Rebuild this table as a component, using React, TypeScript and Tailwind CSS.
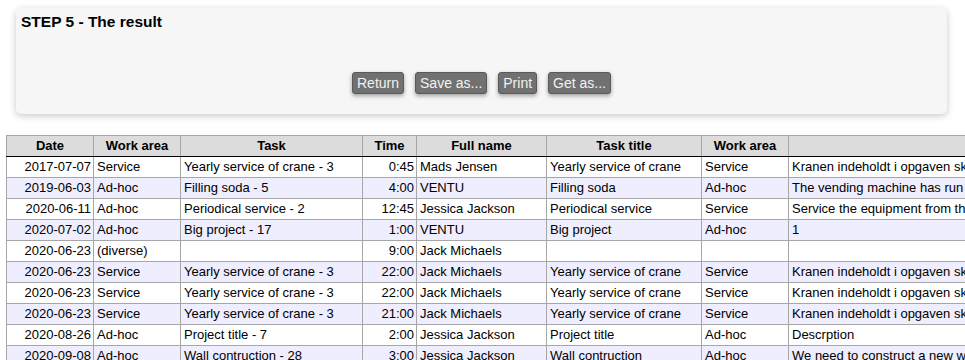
import React from "react";

type Row = {
    date: string;
    area: string;
    task: string;
    time: string;
    name: string;
    title: string;
    area2: string;
    desc: string;
};

const rows: Row[] = [
    {date: "2017-07-07", area: "Service", task: "Yearly service of crane - 3", time: "0:45", name: "Mads Jensen", title: "Yearly service of crane", area2: "Service", desc: "Kranen indeholdt i opgaven skal have det årlige eftersyn"},
    {date: "2019-06-03", area: "Ad-hoc", task: "Filling soda - 5", time: "4:00", name: "VENTU", title: "Filling soda", area2: "Ad-hoc", desc: "The vending machine has run out of soda"},
    {date: "2020-06-11", area: "Ad-hoc", task: "Periodical service - 2", time: "12:45", name: "Jessica Jackson", title: "Periodical service", area2: "Service", desc: "Service the equipment from this list"},
    {date: "2020-07-02", area: "Ad-hoc", task: "Big project - 17", time: "1:00", name: "VENTU", title: "Big project", area2: "Ad-hoc", desc: "1"},
    {date: "2020-06-23", area: "(diverse)", task: "", time: "9:00", name: "Jack Michaels", title: "", area2: "", desc: ""},
    {date: "2020-06-23", area: "Service", task: "Yearly service of crane - 3", time: "22:00", name: "Jack Michaels", title: "Yearly service of crane", area2: "Service", desc: "Kranen indeholdt i opgaven skal have det årlige eftersyn"},
    {date: "2020-06-23", area: "Service", task: "Yearly service of crane - 3", time: "22:00", name: "Jack Michaels", title: "Yearly service of crane", area2: "Service", desc: "Kranen indeholdt i opgaven skal have det årlige eftersyn"},
    {date: "2020-06-23", area: "Service", task: "Yearly service of crane - 3", time: "21:00", name: "Jack Michaels", title: "Yearly service of crane", area2: "Service", desc: "Kranen indeholdt i opgaven skal have det årlige eftersyn"},
    {date: "2020-08-26", area: "Ad-hoc", task: "Project title - 7", time: "2:00", name: "Jessica Jackson", title: "Project title", area2: "Ad-hoc", desc: "Descrption"},
    {date: "2020-09-08", area: "Ad-hoc", task: "Wall contruction - 28", time: "3:00", name: "Jessica Jackson", title: "Wall contruction", area2: "Ad-hoc", desc: "We need to construct a new wall in the hall"},
];

const Btn = ({label}: { label: string }) => (
    <button type="button"
            className="h-[22px] px-[4px] rounded-[3px] border border-[#595959] bg-[#717171] text-[#f2f2f2] text-[14px] leading-[20px] shadow-[0_2px_4px_rgba(0,0,0,0.35)]">
        {label}
    </button>
);

const td = "border border-[#a6a6a6] h-[21px] py-0 px-[3px] leading-[20px] whitespace-nowrap overflow-hidden";
const th = "border border-[#a6a6a6] border-b-black h-[21px] py-0 px-[3px] leading-[20px] font-bold text-center whitespace-nowrap";

export default function App() {
    return (
        <div className="w-[965px] h-[360px] overflow-hidden bg-white text-black font-['Liberation_Sans',Arial,sans-serif]">
            <div className="pt-[8px] ml-4 mr-[18px]">
                <div className="flex flex-col h-[106px] rounded-[5px] bg-[#f6f6f6] shadow-[0_2px_7px_rgba(0,0,0,0.22)] pt-[5px] px-[5px]">
                    <h3 className="text-[15.5px] font-bold leading-[18px]">STEP 5 - The result</h3>
                    <div className="flex justify-center gap-[11px] mt-[41px]">
                        <Btn label="Return"/>
                        <Btn label="Save as..."/>
                        <Btn label="Print"/>
                        <Btn label="Get as..."/>
                    </div>
                </div>
            </div>
            <div className="pl-[6px] pt-[21px]">
                <table className="table-fixed border-collapse text-[13px] w-[1300px]">
                    <colgroup>
                        <col className="w-[87px]"/>
                        <col className="w-[87px]"/>
                        <col className="w-[182px]"/>
                        <col className="w-[54px]"/>
                        <col className="w-[130px]"/>
                        <col className="w-[155px]"/>
                        <col className="w-[87px]"/>
                        <col className="w-[518px]"/>
                    </colgroup>
                    <thead>
                    <tr className="bg-[#dcdcdc]">
                        <th className={th}>Date</th>
                        <th className={th}>Work area</th>
                        <th className={th}>Task</th>
                        <th className={th}>Time</th>
                        <th className={th}>Full name</th>
                        <th className={th}>Task title</th>
                        <th className={th}>Work area</th>
                        <th className={th}></th>
                    </tr>
                    </thead>
                    <tbody>
                    {rows.map((r, i) => (
                        <tr key={i} className={i % 2 === 1 ? "bg-[#eeeeff]" : "bg-white"}>
                            <td className={td + " text-right pr-[2px]"}>{r.date}</td>
                            <td className={td}>{r.area}</td>
                            <td className={td}>{r.task}</td>
                            <td className={td + " text-right pr-[2px]"}>{r.time}</td>
                            <td className={td}>{r.name}</td>
                            <td className={td}>{r.title}</td>
                            <td className={td}>{r.area2}</td>
                            <td className={td}>{r.desc}</td>
                        </tr>
                    ))}
                    </tbody>
                </table>
            </div>
        </div>
    );
}
